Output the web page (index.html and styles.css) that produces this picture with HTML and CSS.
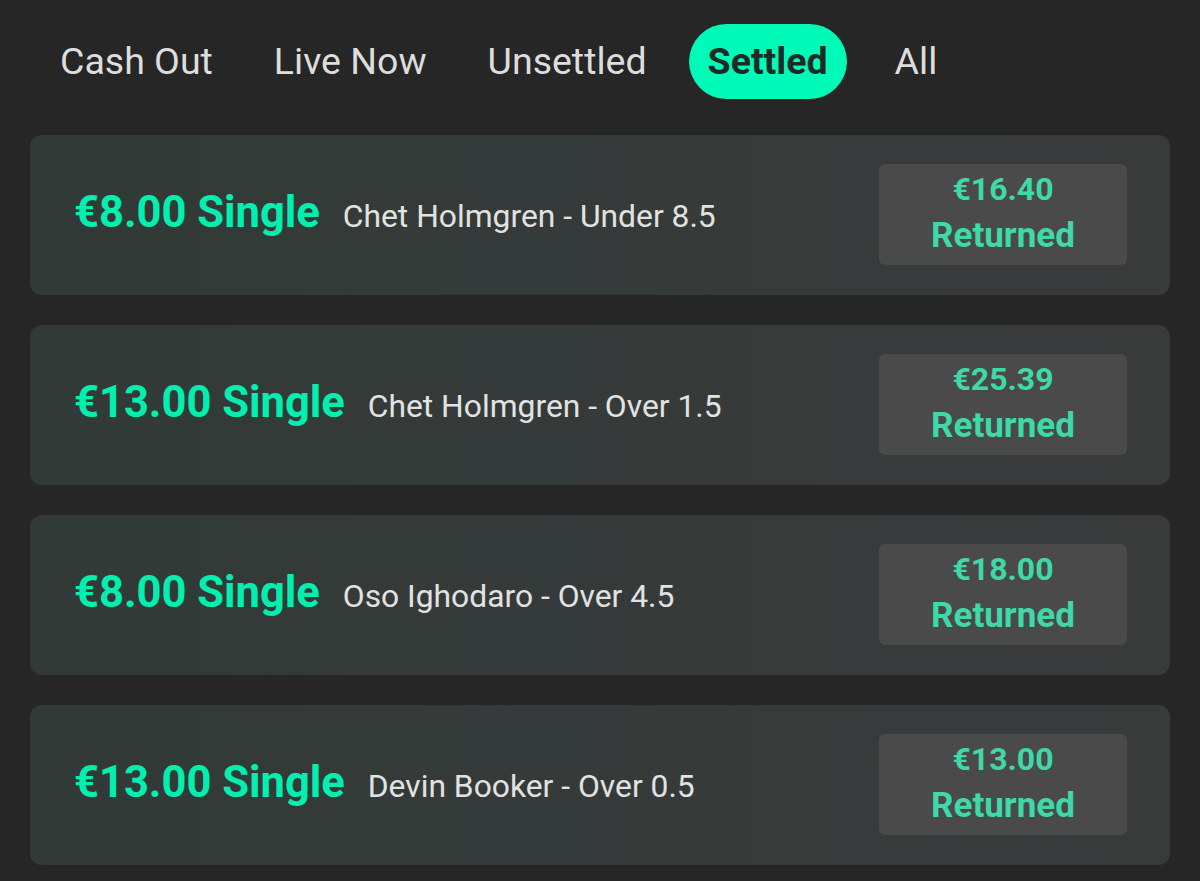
FILE: index.html
```html
<!DOCTYPE html>
<html>
<head>
<meta charset="utf-8">
<link rel="stylesheet" href="styles.css">
</head>
<body>
<div class="page">
  <nav class="tabs">
    <div class="tab">Cash Out</div>
    <div class="tab">Live Now</div>
    <div class="tab">Unsettled</div>
    <div class="tab active">Settled</div>
    <div class="tab">All</div>
  </nav>
  <div class="bets">
    <div class="card">
      <div class="info"><span class="stake">€8.00 Single</span><span class="sel">Chet Holmgren - Under 8.5</span></div>
      <div class="ret"><span class="amt">€16.40</span><span class="lbl">Returned</span></div>
    </div>
    <div class="card">
      <div class="info"><span class="stake">€13.00 Single</span><span class="sel">Chet Holmgren - Over 1.5</span></div>
      <div class="ret"><span class="amt">€25.39</span><span class="lbl">Returned</span></div>
    </div>
    <div class="card">
      <div class="info"><span class="stake">€8.00 Single</span><span class="sel">Oso Ighodaro - Over 4.5</span></div>
      <div class="ret"><span class="amt">€18.00</span><span class="lbl">Returned</span></div>
    </div>
    <div class="card">
      <div class="info"><span class="stake">€13.00 Single</span><span class="sel">Devin Booker - Over 0.5</span></div>
      <div class="ret"><span class="amt">€13.00</span><span class="lbl">Returned</span></div>
    </div>
  </div>
</div>
</body>
</html>
```
FILE: styles.css
```css
html, body {
  margin: 0;
  padding: 0;
  background: #262626;
  font-family: Roboto, "Liberation Sans", sans-serif;
}
.page {
  width: 1200px;
  height: 881px;
  overflow: hidden;
}
.tabs {
  display: flex;
  align-items: center;
  gap: 21px;
  padding: 24px 0 0 40px;
}
.tab {
  height: 75px;
  line-height: 75px;
  padding: 0 20px;
  font-size: 37.5px;
  color: #dddddd;
  border-radius: 38px;
}
.tab.active {
  background: #00fbb8;
  color: #1c2b26;
  font-weight: 700;
  padding: 0 19px;
  margin: 0 7px 0 1px;
}
.bets {
  display: flex;
  flex-direction: column;
  gap: 30px;
  padding: 36px 30px 0 30px;
}
.card {
  height: 160px;
  border-radius: 12px;
  background: linear-gradient(90deg, #313a37 0%, #363b3a 60%, #393b3b 100%);
  display: flex;
  align-items: center;
  justify-content: space-between;
  padding: 0 43px 0 44px;
  box-sizing: border-box;
}
.info {
  display: flex;
  align-items: baseline;
  gap: 23px;
  margin-top: -5px;
}
.stake {
  font-size: 43.5px;
  font-weight: 700;
  color: #02efb0;
}
.sel {
  font-size: 31.8px;
  color: #e2e2e2;
}
.ret {
  width: 248px;
  height: 101px;
  margin-top: -2px;
  padding-top: 5px;
  box-sizing: border-box;
  background: #4a4a4a;
  border-radius: 6px;
  display: flex;
  flex-direction: column;
  align-items: center;
  justify-content: flex-start;
  color: #3fd9a8;
  font-weight: 700;
}
.amt {
  font-size: 32px;
  line-height: 40px;
}
.lbl {
  font-size: 35px;
  line-height: 54px;
}
```
